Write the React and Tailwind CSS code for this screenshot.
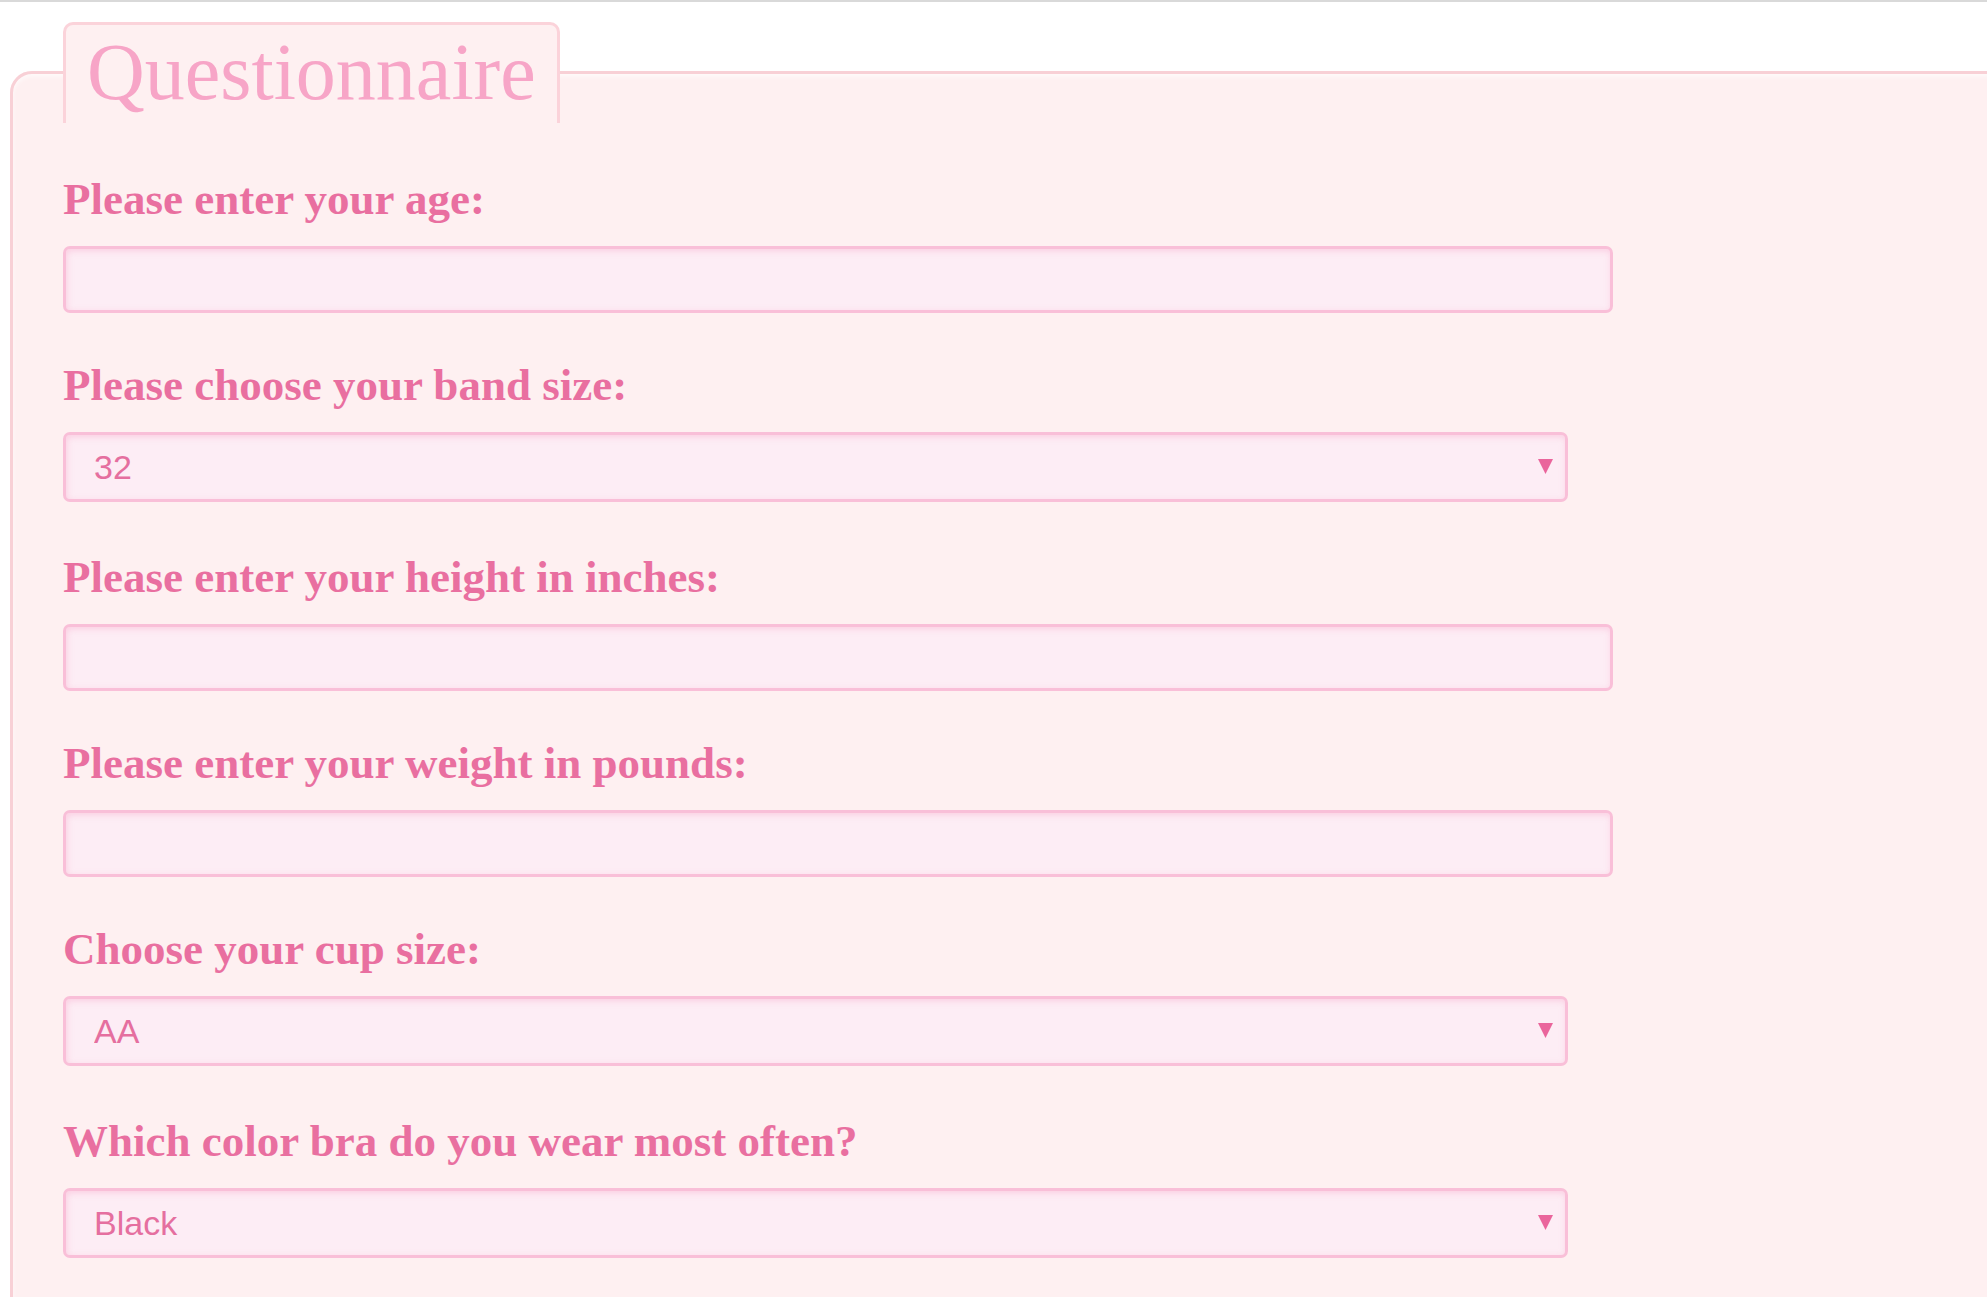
import React from 'react';

const labelCls =
  "block mb-[20px] text-[45px] leading-[53px] font-bold text-[#e96fa0] font-['Liberation_Serif',serif]";

const boxCls =
  "block h-[67px] w-[1550px] rounded-[7px] border-[3px] border-[#f9bfd8] bg-[#fdedf5] shadow-[inset_1px_2px_6px_rgba(249,180,210,0.55)] outline-none";

const Field = ({ label, children }) => (
  <div className="mb-[46px]">
    <label className={labelCls}>{label}</label>
    {children}
  </div>
);

const Select = ({ value, options }) => (
  <div className="relative w-[1505px] pb-[3px]">
    <select
      defaultValue={value}
      className="block h-[70px] w-full appearance-none rounded-[7px] border-[3px] border-[#f9bfd8] bg-[#fdedf5] pl-[28px] text-[34px] text-[#e56f9f] font-['Liberation_Sans',sans-serif] shadow-[inset_1px_2px_6px_rgba(249,180,210,0.55)] outline-none"
    >
      {options.map((o) => (
        <option key={o}>{o}</option>
      ))}
    </select>
    {/* dropdown arrow */}
    <svg
      className="pointer-events-none absolute right-[15px] top-[27px]"
      width="15"
      height="15"
      viewBox="0 0 15 15"
    >
      <polygon points="0,0 15,0 7.5,15" fill="#ea659c" />
    </svg>
  </div>
);

export default function App() {
  return (
    <div className="min-h-screen w-full overflow-hidden bg-white">
      <div className="h-[2px] bg-[#d9d9d9]" />

      <fieldset className="ml-[10px] mt-[20px] min-w-[2100px] rounded-[22px] border-[3px] border-[#f8d0d6] bg-[#fef0f1] pl-[50px] pb-[40px] shadow-[inset_0_3px_4px_rgba(255,255,255,0.6)]">
        <legend className="rounded-t-[10px] border-[3px] border-b-0 border-[#fbd3da] bg-[#fef0f1] px-[21px] pt-[7px] pb-[11px] text-[80px] leading-none text-[#f7a5c7] font-['Liberation_Serif',serif]">
          Questionnaire
        </legend>

        <div className="pt-[50px]">
          <Field label="Please enter your age:">
            <input type="text" className={boxCls} />
          </Field>

          <Field label="Please choose your band size:">
            <Select value="32" options={['32', '34', '36', '38', '40', '42']} />
          </Field>

          <Field label="Please enter your height in inches:">
            <input type="text" className={boxCls} />
          </Field>

          <Field label="Please enter your weight in pounds:">
            <input type="text" className={boxCls} />
          </Field>

          <Field label="Choose your cup size:">
            <Select value="AA" options={['AA', 'A', 'B', 'C', 'D', 'DD']} />
          </Field>

          <Field label="Which color bra do you wear most often?">
            <Select value="Black" options={['Black', 'White', 'Nude', 'Pink', 'Red']} />
          </Field>
        </div>
      </fieldset>
    </div>
  );
}
